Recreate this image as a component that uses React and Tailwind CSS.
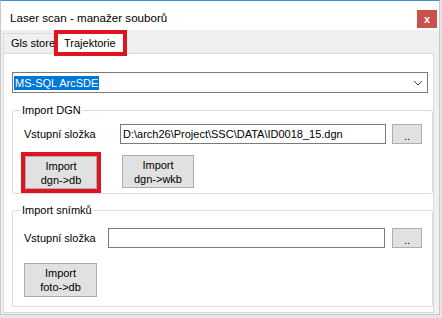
import React from "react";

const font = { fontFamily: '"Liberation Sans", Arial, sans-serif' };

function WinButton({ lines, className = "" }) {
  return (
    <div
      className={`flex flex-col items-center justify-center border border-[#adadad] bg-[#e1e1e1] text-[11px] leading-[14px] text-black ${className}`}
    >
      {lines.map((l) => (
        <span key={l}>{l}</span>
      ))}
    </div>
  );
}

function Browse() {
  return (
    <div className="flex h-[20px] w-[30px] items-end justify-center border border-[#adadad] bg-[#e1e1e1] pb-[3px] text-[11px] leading-[8px]">
      ..
    </div>
  );
}

function Group({ title, children, className = "" }) {
  return (
    <fieldset className={`rounded-[2px] border border-[#dcdcdc] px-[10px] ${className}`}>
      <legend className="ml-[-2px] px-[1px] text-[11px] leading-[14px] text-black">{title}</legend>
      {children}
    </fieldset>
  );
}

export default function App() {
  return (
    <div className="h-[318px] w-[442px] overflow-hidden bg-[#e6e6e6]" style={font}>
      <div className="flex h-[315px] w-[440px] flex-col border-x border-b border-t border-[#c8c8c8] border-t-[#3b8fd5] bg-[#f0f0f0]">
        {/* title bar */}
        <div className="flex h-[29px] items-center justify-between bg-white pl-[9px] pr-[2px]">
          <span className="mt-[4px] text-[11.6px] text-black">Laser scan - manažer souborů</span>
          <div className="mt-[7px] flex h-[18px] w-[20px] items-center justify-center bg-[#c9504b] text-[11px] font-bold leading-none text-white">
            x
          </div>
        </div>

        {/* tabs */}
        <div className="relative z-10 mb-[-3px] flex h-[26px] items-start pl-[2px]">
          <div className="mt-[3px] flex h-[20px] w-[51px] items-center whitespace-nowrap border-x border-t border-[#d9d9d9] bg-[#f0f0f0] pl-[7px] text-[11px]">
            Gls store
          </div>
          <div className="flex h-[26px] w-[73px] items-start whitespace-nowrap bg-white pl-[10px] pt-[6px] text-[11px] leading-[14px] ring-[4px] ring-inset ring-[#e0141e]">
            Trajektorie
          </div>
        </div>

        {/* tab page */}
        <div className="mx-[2px] flex h-[260px] w-[431px] flex-col border border-[#d9d9d9] bg-white pl-[8px] pr-[4px] pt-[18px]">
          <div className="flex h-[21px] w-[416px] items-center justify-between border border-[#7a7a7a] bg-white pl-[1px] pr-[4px]">
            <span className="bg-[#0078d7] px-[1px] text-[11px] leading-[14px] text-white">
              MS-SQL ArcSDE
            </span>
            <svg width="10" height="6" viewBox="0 0 10 6">
              <path d="M1 1 L5 5 L9 1" fill="none" stroke="#444" strokeWidth="1" />
            </svg>
          </div>

          <Group title="Import DGN" className="mt-[10px] h-[91px] w-[416px]">
            <div className="mt-[7px] flex h-[20px] items-center">
              <span className="ml-[1px] w-[96px] text-[11px]">Vstupní složka</span>
              <div className="flex h-[20px] w-[266px] items-center border border-[#7a7a7a] pl-[2px] text-[11px]">
                D:\arch26\Project\SSC\DATA\ID0018_15.dgn
              </div>
              <div className="ml-[6px]">
                <Browse />
              </div>
            </div>
            <div className="mt-[8px] flex items-start">
              <div className="ml-[-2px] border-[4px] border-[#e0141e]">
                <WinButton lines={["Import", "dgn->db"]} className="h-[33px] w-[72px]" />
              </div>
              <WinButton lines={["Import", "dgn->wkb"]} className="ml-[21px] mt-[3px] h-[33px] w-[72px]" />
            </div>
          </Group>

          <Group title="Import snímků" className="mt-[9px] h-[104px] w-[416px]">
            <div className="mt-[11px] flex h-[20px] items-center">
              <span className="ml-[1px] w-[84px] text-[11px]">Vstupní složka</span>
              <div className="h-[20px] w-[277px] border border-[#7a7a7a]" />
              <div className="ml-[7px]">
                <Browse />
              </div>
            </div>
            <WinButton lines={["Import", "foto->db"]} className="mt-[15px] ml-[1px] h-[34px] w-[73px]" />
          </Group>
        </div>
      </div>
    </div>
  );
}
